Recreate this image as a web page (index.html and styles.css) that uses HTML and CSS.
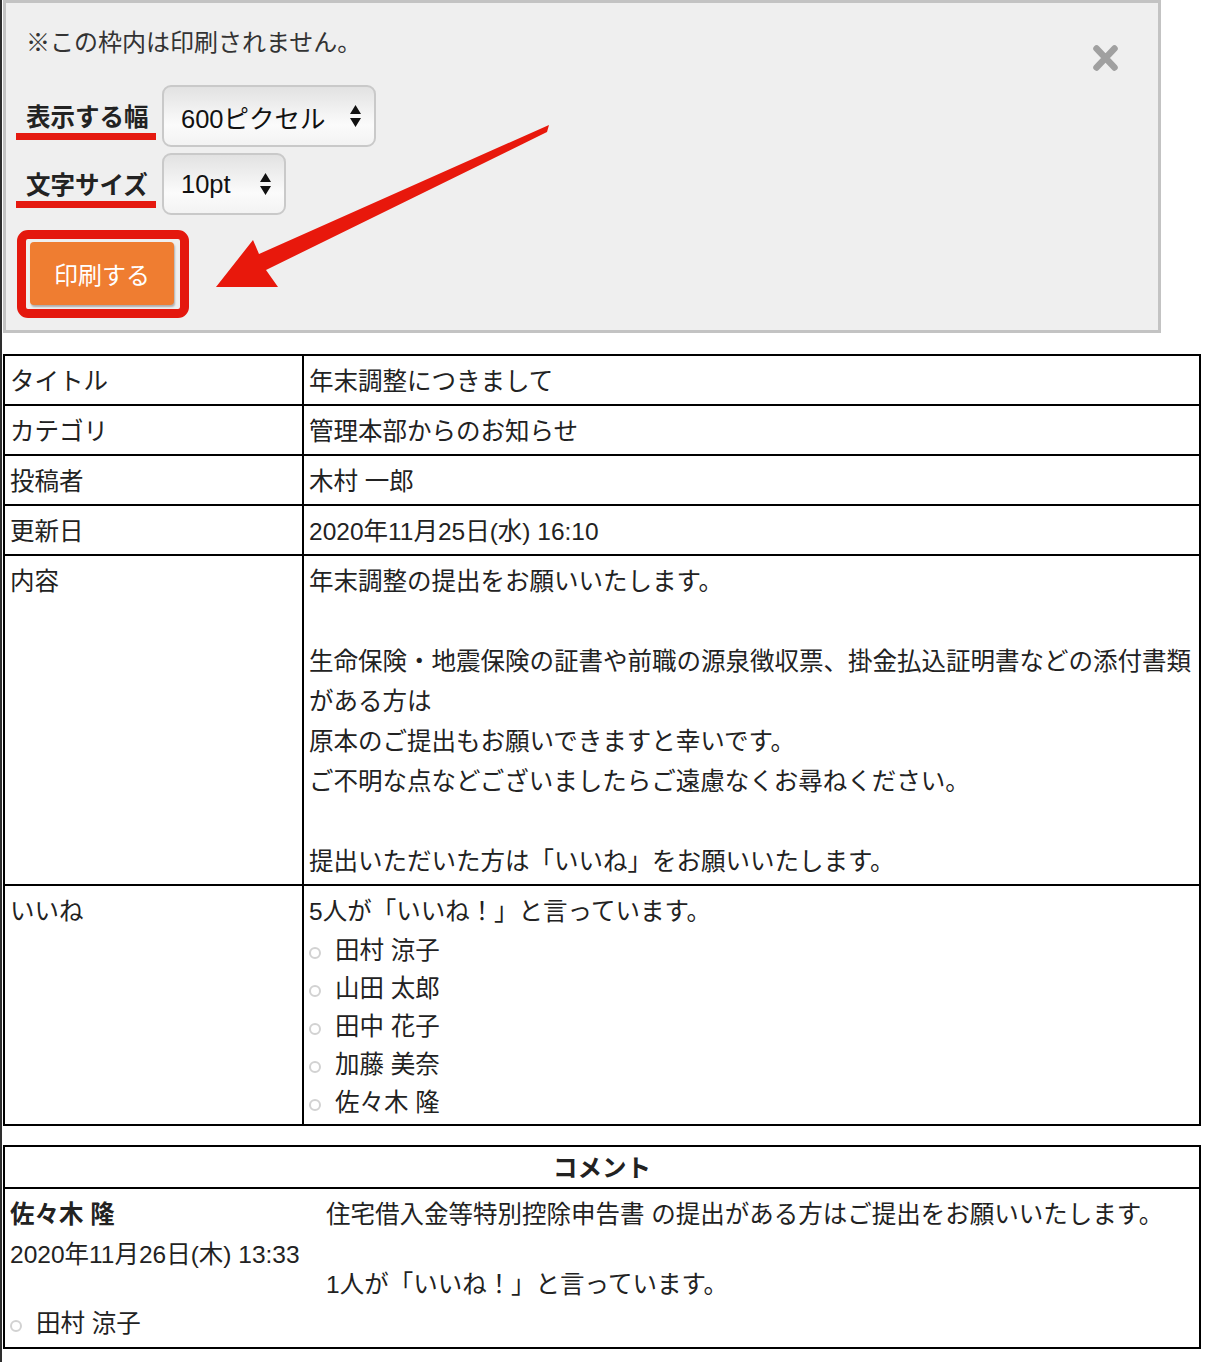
FILE: index.html
```html
<!DOCTYPE html>
<html lang="ja">
<head>
    <meta charset="UTF-8">
    <title>年末調整につきまして</title>
    <link rel="stylesheet" href="styles.css">
</head>
<body>
<div class="printbox">
    <p class="note">※この枠内は印刷されません。</p>
    <div class="row">
        <span class="lbl">表示する幅</span>
        <div class="sel sel-w">600ピクセル<svg width="11" height="22" viewBox="0 0 11 22"><path d="M5.5 0 L11 9 L0 9 Z M0 13 L11 13 L5.5 22 Z" fill="#111"/></svg></div>
    </div>
    <div class="row">
        <span class="lbl">文字サイズ</span>
        <div class="sel sel-s">10pt<svg width="11" height="22" viewBox="0 0 11 22"><path d="M5.5 0 L11 9 L0 9 Z M0 13 L11 13 L5.5 22 Z" fill="#111"/></svg></div>
    </div>
    <div class="ring"><button class="btn">印刷する</button></div>
    <a class="close" href="#"><svg width="25" height="26" viewBox="0 0 25 26"><path d="M3.5 3.5 L21.5 22.5 M21.5 3.5 L3.5 22.5" stroke="#a0a0a0" stroke-width="6.5" stroke-linecap="round"/></svg></a>
    <svg class="arrow" width="600" height="340" viewBox="0 0 600 340"><polygon points="549,125 259,254 253,240 216,287 278,287 266,270 547,132" fill="#e8180c"/></svg>
</div>

<table class="info">
    <tr><th>タイトル</th><td>年末調整につきまして</td></tr>
    <tr><th>カテゴリ</th><td>管理本部からのお知らせ</td></tr>
    <tr><th>投稿者</th><td>木村 一郎</td></tr>
    <tr><th>更新日</th><td>2020年11月25日(水) 16:10</td></tr>
    <tr><th>内容</th><td>年末調整の提出をお願いいたします。<br><br>生命保険・地震保険の証書や前職の源泉徴収票、掛金払込証明書などの添付書類がある方は<br>原本のご提出もお願いできますと幸いです。<br>ご不明な点などございましたらご遠慮なくお尋ねください。<br><br>提出いただいた方は「いいね」をお願いいたします。</td></tr>
    <tr><th>いいね</th><td>5人が「いいね！」と言っています。
        <ul class="likes">
            <li>田村 涼子</li>
            <li>山田 太郎</li>
            <li>田中 花子</li>
            <li>加藤 美奈</li>
            <li>佐々木 隆</li>
        </ul>
    </td></tr>
</table>

<table class="comments">
    <tr><th>コメント</th></tr>
    <tr><td class="cbody">
        <div class="cmt">
            <div class="cmeta"><b>佐々木 隆</b><br>2020年11月26日(木) 13:33</div>
            <div class="ctext">住宅借入金等特別控除申告書 の提出がある方はご提出をお願いいたします。<p class="clike">1人が「いいね！」と言っています。</p></div>
            <ul class="likes cl">
                <li>田村 涼子</li>
            </ul>
        </div>
    </td></tr>
</table>
</body>
</html>
```
FILE: styles.css
```css
*{box-sizing:border-box;}
body{margin:0;border-left:2px solid #2e2e2e;min-height:1362px;background:#fff;color:#222;font-family:"Liberation Sans","Noto Sans CJK JP",sans-serif;}

.printbox{position:relative;margin-left:1px;width:1158px;height:333px;border:3px solid #c3c3c3;background:#efefef;padding:20px 10px 0;}
.note{margin:0 0 22px 10px;font-size:24px;line-height:40px;color:#333;}
.row{display:flex;align-items:flex-start;height:62px;margin-bottom:6px;}
.lbl{width:140px;margin-top:17px;padding-left:10px;font-size:24.5px;font-weight:bold;line-height:31px;border-bottom:7px solid #e5190f;}
.sel{display:flex;align-items:center;justify-content:space-between;height:62px;margin-left:6px;padding:0 13px 0 17px;border:2px solid #c9c9c9;border-radius:9px;background:linear-gradient(#e2e2e2,#fbfbfb 65%,#f3f3f3);font-size:25.5px;color:#111;}
.sel-w{width:214px;}
.sel-s{width:124px;}
.ring{width:172px;height:88px;margin:15px 0 0 1px;padding:3px 5px 3px 4px;border:9px solid #e4180e;border-radius:11px;}
.btn{display:block;width:144px;height:63px;border:none;border-radius:4px;background:#ef7d31;color:#fff;font-family:inherit;font-size:24px;box-shadow:1px 2px 2px rgba(0,0,0,.28);}
.close{position:absolute;right:40px;top:42px;width:25px;height:26px;}
.arrow{position:absolute;left:-6px;top:-3px;pointer-events:none;}

table{border-collapse:collapse;table-layout:fixed;margin-left:1px;width:1198px;font-size:24.5px;line-height:40px;}
th,td{border:2px solid #000;padding:6px 5px 2px;vertical-align:top;text-align:left;font-weight:normal;}
.info{margin-top:21px;}
.info th{width:299px;}
.comments{margin-top:19px;}
.comments th{text-align:center;font-weight:bold;line-height:32px;}
.comments .cbody{padding-bottom:4px;}

.likes{margin:0;padding:0;list-style:none;}
.likes li{position:relative;padding-left:26px;line-height:38px;}
.likes li:before{content:"";position:absolute;left:0;top:15px;width:8px;height:8px;border:2px solid #d2d2d2;border-radius:50%;}

.cmt{display:grid;grid-template-columns:316px 1fr;}
.cmeta b{font-weight:bold;}
.clike{margin:30px 0 0;}
.cl{grid-column:1 / -1;}
```
